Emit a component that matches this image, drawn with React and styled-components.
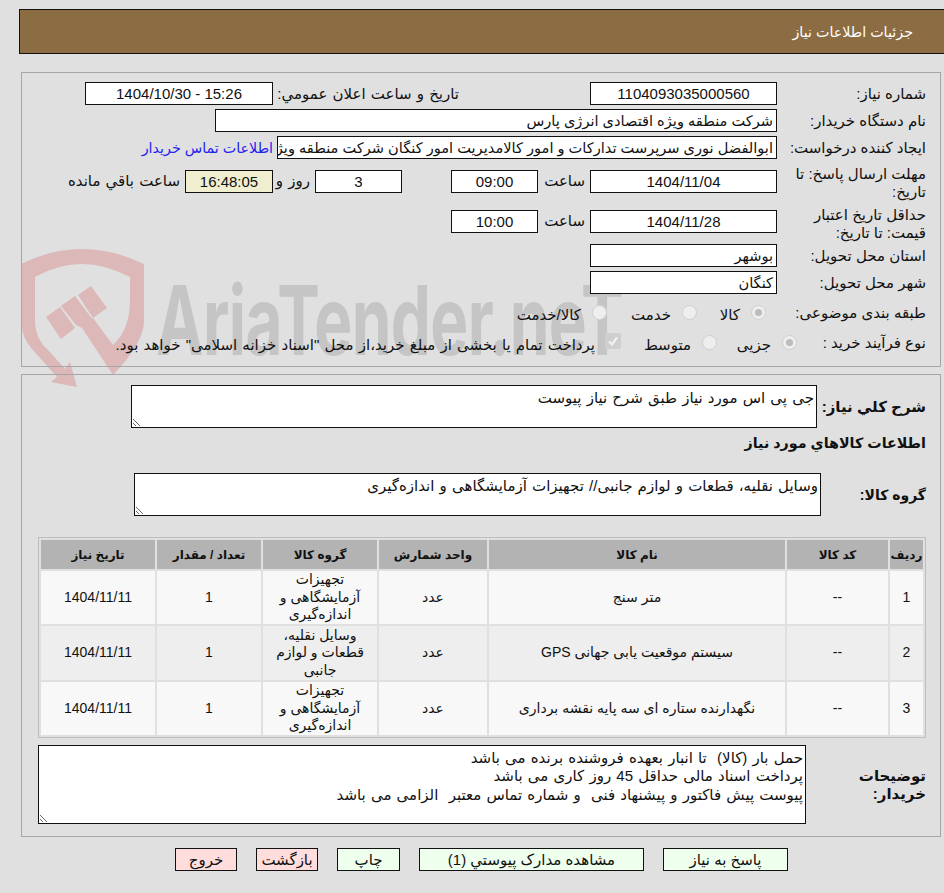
import React from "react";
import styled, { createGlobalStyle } from "styled-components";

const STACK = `"Liberation Sans", "DejaVu Sans", sans-serif`;

const Global = createGlobalStyle`
  html, body { margin: 0; padding: 0; background: #e0e0e0; overflow: hidden; }
  body { font-family: ${STACK}; font-size: 15px; color: #111; }
`;
const Page = styled.div`position: relative; width: 944px; height: 893px; overflow: hidden;`;
const Watermark = styled.div`position: absolute; left: 20px; top: 249px; display: flex; align-items: flex-start; z-index: 0;`;
const Brand = styled.span`
  display: block; margin: 23px 0 0 8px; font: 700 96px/96px Inter, "Liberation Sans", sans-serif;
  color: #c5c5c5; letter-spacing: -1px; white-space: nowrap; transform: scaleX(0.665); transform-origin: 0 0;
`;
const Header = styled.header`
  position: relative; z-index: 1; box-sizing: border-box; height: 45px; width: 930px; margin: 9px 0 0 19px;
  background: #8c6c42; border: 1px solid #111; border-right: 0; display: flex; align-items: center;
  direction: rtl; padding-right: 36px; color: #fff; font-size: 14.3px;
`;
const Section = styled.section`
  position: relative; z-index: 1; box-sizing: border-box; margin-left: 21px; width: 920px;
  margin-top: ${p => p.$top}px; height: ${p => p.$h}px; border: 1px solid #a6a6a6; direction: rtl; padding: ${p => p.$pad};
`;
const Row = styled.div`display: flex; align-items: ${p => p.$align || "center"}; height: ${p => p.$h}px; margin-top: ${p => p.$mt || 0}px; white-space: nowrap;`;
const Label = styled.span`
  box-sizing: border-box; width: ${p => p.$w || 149}px; flex: none; font-weight: ${p => p.$bold ? 700 : 400}; font-size: ${p => p.$size || 15}px;
  line-height: 18px; white-space: normal; margin-top: ${p => p.$top || 0}px; padding-left: ${p => p.$padLeft || 0}px;
`;
const Box = styled.div`
  box-sizing: border-box; height: ${p => p.$h || 23}px; width: ${p => p.$w}px; flex: none; background: ${p => p.$bg || "#fff"}; border: 1px solid #111;
  margin-left: ${p => p.$gap || 0}px; margin-top: ${p => p.$top || 0}px; display: flex; align-items: center; justify-content: ${p => p.$start ? "flex-start" : "center"};
  padding: 0 3px; overflow: hidden; font-size: ${p => p.$start ? 14.6 : 15}px; white-space: nowrap;
`;
const Text = styled.span`
  flex: none; width: ${p => p.$w ? p.$w + "px" : "auto"}; margin-left: ${p => p.$gap || 0}px; margin-top: ${p => p.$top || 0}px; font-size: 15px; word-spacing: 1px;
`;
const Link = styled.a`color: #2222ee; font-size: 14.3px; margin-right: 4px; text-decoration: none;`;
const Radio = styled.i`
  flex: none; box-sizing: border-box; width: 15px; height: 15px; border-radius: 50%; background: #eeeeee; border: 1px solid #cfcfcf;
  margin: ${p => p.$m}; position: relative; top: -1px;
  ${p => p.$on && `&::after{content:"";position:absolute;inset:3px;border-radius:50%;background:#bcbcbc;}`}
`;
const Check = styled.i`
  flex: none; box-sizing: border-box; width: 16px; height: 16px; border-radius: 2px; background: #cfcfcf; margin: ${p => p.$m}; position: relative; top: -2px;
  display: flex; align-items: center; justify-content: center;
`;
const Area = styled.textarea`
  box-sizing: border-box; display: block; width: ${p => p.$w}px; height: ${p => p.$h}px; flex: none; border: 1px solid #111; border-radius: 0; background: #fff;
  font: 15px/18.3px ${STACK}; word-spacing: 1px; color: #111; padding: 3px 2px 2px; margin: 0; direction: rtl; outline: none;
`;
const Heading = styled.h3`margin: 0; font-size: 14.3px; font-weight: 700; line-height: 20px;`;
const Table = styled.table`
  border: 1px solid #bdbdbd; border-collapse: separate; border-spacing: 2px; width: 888px; margin: 21px 0 0 0; table-layout: fixed; font-size: 14px;
`;
const Th = styled.th`background: #b3b3b3; height: 29px; padding: 0; font-size: 12px; font-weight: 700; width: ${p => p.$w}px;`;
const Td = styled.td`
  background: ${p => p.$alt ? "#eeeeee" : "#f8f8f8"}; padding: 0 3px; text-align: center; height: ${p => p.$h}px; line-height: 17.5px; font-size: 14px;
`;
const Actions = styled.div`display: flex; gap: 19px; direction: rtl; margin: 11px 0 0 0; padding-right: 156px; position: relative; z-index: 1;`;
const Button = styled.button`
  box-sizing: border-box; height: 23px; width: ${p => p.$w}px; background: ${p => p.$red ? "#ffdddd" : "#eeffee"}; border: 1px solid #111; border-radius: 0;
  padding: 0; font: 15px ${STACK}; color: #111; white-space: nowrap; overflow: hidden;
`;

const rows = [
  ["1", "متر سنج", "تجهیزات آزمایشگاهی و اندازه‌گیری", 53],
  ["2", "سیستم موقعیت یابی جهانی GPS", "وسایل نقلیه، قطعات و لوازم جانبی", 54],
  ["3", "نگهدارنده ستاره ای سه پایه نقشه برداری", "تجهیزات آزمایشگاهی و اندازه‌گیری", 53],
];

export default function App() {
  return (
    <Page>
      <Global />
      <Watermark>
        <svg width="128" height="140" viewBox="0 0 128 140" aria-hidden="true">
          <path d="M1 15 Q31 0 62 0 Q93 0 124 15 L124 74 Q122 96 93 126 L62 79 L73 69 L93 96 Q110 80 110 51 L110 28 Q85 15 62 15 Q38 15 15 28 L15 74 Q16 91 28 101 L45 120 L50 113 L57 138 L31 133 L37 128 L12 100 Q2 88 2 78 Z" fill="#dcb8b8" />
          <path d="M26 68 L40 58 L55 79 L41 90 Z M41 57 L55 47 L73 71 L62 79 L56 76 Z M58 46 L71 37 L87 59 L73 69 Z" fill="#dcb8b8" />
        </svg>
        <Brand>AriaTender.neT</Brand>
      </Watermark>
      <Header>جزئیات اطلاعات نیاز</Header>

      <Section $top={18} $h={295} $pad="9px 14px 0 0">
        <Row $h={23}>
          <Label>شماره نیاز:</Label>
          <Box $w={187} $gap={131}>1104093035000560</Box>
          <Text $w={181} $gap={5}>تاریخ و ساعت اعلان عمومي:</Text>
          <Box $w={188}>15:26 - 1404/10/30</Box>
        </Row>
        <Row $h={23} $mt={4}>
          <Label>نام دستگاه خریدار:</Label>
          <Box $w={562} $start>شرکت منطقه ویژه اقتصادی انرژی پارس</Box>
        </Row>
        <Row $h={23} $mt={4}>
          <Label>ایجاد کننده درخواست:</Label>
          <Box $w={500} $start>ابوالفضل نوری سرپرست تدارکات و امور کالامدیریت امور کنگان شرکت منطقه ویژه</Box>
          <Link href="#">اطلاعات تماس خریدار</Link>
        </Row>
        <Row $h={40} $mt={1} $align="flex-start">
          <Label $top={5}>مهلت ارسال پاسخ: تا تاریخ:</Label>
          <Box $w={187} $gap={5} $top={10}>1404/11/04</Box>
          <Text $w={42} $gap={5} $top={12}>ساعت</Text>
          <Box $w={87} $gap={49} $top={10}>09:00</Box>
          <Box $w={87} $gap={5} $top={10}>3</Box>
          <Text $w={37} $top={12}>روز و</Text>
          <Box $w={88} $gap={5} $bg="#efefcf" $top={10}>16:48:05</Box>
          <Text $top={12}>ساعت باقي مانده</Text>
        </Row>
        <Row $h={40} $align="flex-start">
          <Label $top={6}>حداقل تاریخ اعتبار قیمت: تا تاریخ:</Label>
          <Box $w={187} $gap={5} $top={10}>1404/11/28</Box>
          <Text $w={42} $gap={5} $top={12}>ساعت</Text>
          <Box $w={87} $top={10}>10:00</Box>
        </Row>
        <Row $h={23} $mt={4}>
          <Label>استان محل تحویل:</Label>
          <Box $w={187} $start>بوشهر</Box>
        </Row>
        <Row $h={23} $mt={4}>
          <Label>شهر محل تحویل:</Label>
          <Box $w={187} $start>کنگان</Box>
        </Row>
        <Row $h={30} $mt={4}>
          <Label>طبقه بندی موضوعی:</Label>
          <Radio $on $m="0 11px" />
          <Text $w={32} $top={3}>کالا</Text>
          <Radio $m="0 11px" />
          <Text $w={53} $top={3}>خدمت</Text>
          <Radio $m="0 11px" />
          <Text $top={3}>کالا/خدمت</Text>
        </Row>
        <Row $h={30}>
          <Label $w={129}>نوع فرآیند خرید :</Label>
          <Radio $on $m="0 0 0 11px" />
          <Text $w={43} $top={3}>جزیی</Text>
          <Radio $m="0 11px" />
          <Text $w={45} $top={3}>متوسط</Text>
          <Check $m="0 25px 0 10px">
            <svg width="12" height="12" viewBox="0 0 12 12" aria-hidden="true"><path d="M2 6.5 L5 9.5 L10 2.5" fill="none" stroke="#f2f2f2" strokeWidth="2.2" /></svg>
          </Check>
          <Text $top={3}>پرداخت تمام یا بخشی از مبلغ خرید،از محل "اسناد خزانه اسلامی" خواهد بود.</Text>
        </Row>
      </Section>

      <Section $top={7} $h={463} $pad="10px 14px 0 0">
        <Row $h={43}>
          <Label $bold $w={109}>شرح کلي نياز:</Label>
          <Area $w={686} $h={43} readOnly defaultValue="جی پی اس مورد نیاز طبق شرح نیاز پیوست" />
        </Row>
        <Row $h={20} $mt={5}><Heading>اطلاعات کالاهاي مورد نياز</Heading></Row>
        <Row $h={43} $mt={20}>
          <Label $bold $w={105} $size={14}>گروه کالا:</Label>
          <Area $w={687} $h={43} readOnly defaultValue="وسایل نقلیه، قطعات و لوازم جانبی// تجهیزات آزمایشگاهی و اندازه‌گیری" />
        </Row>
        <Table>
          <thead>
            <tr>
              <Th $w={33}>رديف</Th><Th $w={101}>کد کالا</Th><Th $w={296}>نام کالا</Th><Th $w={108}>واحد شمارش</Th>
              <Th $w={114}>گروه کالا</Th><Th $w={104}>تعداد / مقدار</Th><Th>تاریخ نیاز</Th>
            </tr>
          </thead>
          <tbody>
            {rows.map((r, i) => (
              <tr key={r[0]}>
                <Td $alt={i === 1} $h={r[3]}>{r[0]}</Td>
                <Td $alt={i === 1}>--</Td>
                <Td $alt={i === 1}>{r[1]}</Td>
                <Td $alt={i === 1}>عدد</Td>
                <Td $alt={i === 1}>{r[2]}</Td>
                <Td $alt={i === 1}>1</Td>
                <Td $alt={i === 1}>1404/11/11</Td>
              </tr>
            ))}
          </tbody>
        </Table>
        <Row $h={79} $mt={7}>
          <Label $bold $w={120} $padLeft={40}>توضیحات خریدار:</Label>
          <Area $w={768} $h={79} readOnly defaultValue={"حمل بار (کالا)  تا انبار بعهده فروشنده برنده می باشد\nپرداخت اسناد مالی حداقل 45 روز کاری می باشد\nپیوست پیش فاکتور و پیشنهاد فنی  و شماره تماس معتبر  الزامی می باشد"} />
        </Row>
      </Section>

      <Actions>
        <Button $w={125}>پاسخ به نیاز</Button>
        <Button $w={225}>مشاهده مدارک پیوستي (1)</Button>
        <Button $w={63}>چاپ</Button>
        <Button $w={62} $red>بازگشت</Button>
        <Button $w={62} $red>خروج</Button>
      </Actions>
    </Page>
  );
}
